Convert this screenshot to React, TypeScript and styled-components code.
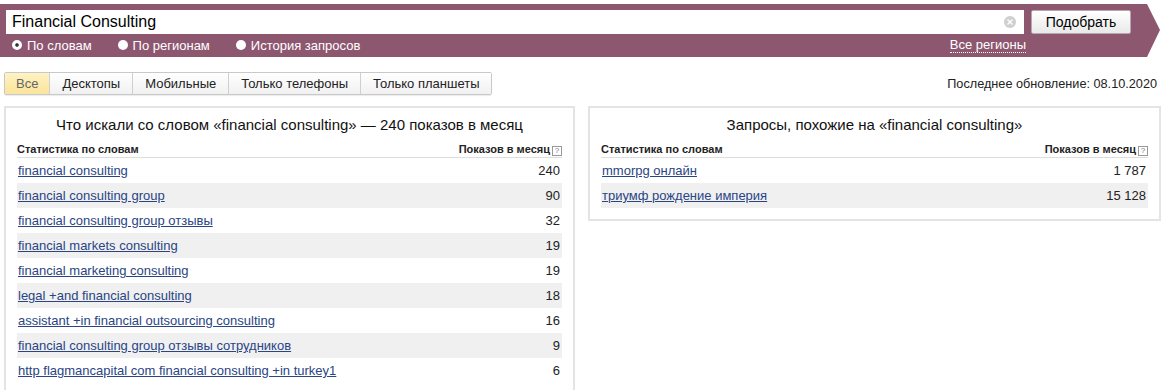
import styled, { createGlobalStyle } from "styled-components"

const GlobalStyle = createGlobalStyle`
  body {
    margin: 0;
    background: #fff;
    font-family: 'Liberation Sans', Arial, sans-serif;
    color: #000;
  }
`

const Page = styled.div`
  width: 1167px;
  height: 390px;
  overflow: hidden;
`

const Band = styled.div`
  margin: 4px 0 0 0;
  width: 1160px;
  height: 53px;
  background: #8e5770;
  clip-path: polygon(0 0, 1147px 0, 1160px 26px, 1147px 53px, 0 53px);
  padding: 6px 0 0 6px;
  box-sizing: border-box;
`

const SearchRow = styled.div`
  display: flex;
  align-items: center;
  gap: 7px;
`

const InputBox = styled.div`
  position: relative;
  width: 1018px;
  height: 24px;
  background: #fff;
  box-sizing: border-box;
  display: flex;
  align-items: center;
  padding-left: 6px;
  font-size: 16px;
  color: #000;
`

const ClearIcon = styled.span`
  position: absolute;
  right: 8px;
  top: 6px;
  width: 12px;
  height: 12px;
  border-radius: 50%;
  background: #cfcfcf;
  display: flex;
  align-items: center;
  justify-content: center;
`

const SubmitButton = styled.button`
  width: 100px;
  height: 24px;
  border: 1px solid #b7a7ae;
  border-radius: 2px;
  background: linear-gradient(#ffffff, #e9e9e9);
  font-family: 'Liberation Sans', Arial, sans-serif;
  font-size: 14px;
  color: #000;
  padding: 0;
`

const OptionsRow = styled.div`
  display: flex;
  align-items: center;
  height: 22px;
  width: 1018px;
  padding-left: 6px;
  box-sizing: border-box;
`

const Radio = styled.label`
  display: flex;
  align-items: center;
  gap: 5px;
  color: #fff;
  font-size: 13px;
  margin-right: 26px;
`

const RadioDot = styled.span<{ $checked?: boolean }>`
  width: 10px;
  height: 10px;
  border-radius: 50%;
  background: #fff;
  box-sizing: border-box;
  border: ${(p) => (p.$checked ? "3px solid #fff" : "none")};
  box-shadow: ${(p) => (p.$checked ? "inset 0 0 0 2px #333" : "none")};
`

const Regions = styled.span`
  margin-left: auto;
  margin-right: -2px;
  color: #fff;
  font-size: 13px;
  border-bottom: 1px dotted #fff;
  line-height: 14px;
`

const TabsRow = styled.div`
  display: flex;
  align-items: center;
  justify-content: space-between;
  margin: 15px 10px 0 4px;
`

const Tabs = styled.div`
  display: flex;
  border: 1px solid #c9c9c9;
  border-radius: 2px;
  box-shadow: 0 1px 1px rgba(0, 0, 0, 0.08);
`

const Tab = styled.div<{ $active?: boolean }>`
  height: 21px;
  display: flex;
  align-items: center;
  padding: 0 ${(p) => (p.$active ? "11px" : "12px")};
  font-size: 13px;
  color: ${(p) => (p.$active ? "#666" : "#222")};
  background: ${(p) =>
    p.$active ? "linear-gradient(#fff3c4, #fbe49a)" : "linear-gradient(#ffffff, #f1f1f1)"};
  & + & {
    border-left: 1px solid #cfcfcf;
  }
`

const Updated = styled.div`
  font-size: 12.7px;
  color: #222;
`

const Panels = styled.div`
  display: flex;
  align-items: flex-start;
  gap: 13px;
  margin: 11px 0 0 4px;
`

const Panel = styled.div<{ $width: number }>`
  width: ${(p) => p.$width}px;
  box-sizing: border-box;
  border: 2px solid #e4e4e4;
  padding: 6px 11px 11px 11px;
`

const PanelTitle = styled.div`
  text-align: center;
  font-size: 15px;
  line-height: 22px;
  color: #111;
  margin-bottom: 5px;
`

const HeadRow = styled.div`
  display: flex;
  justify-content: space-between;
  align-items: center;
  font-size: 11px;
  font-weight: bold;
  color: #222;
  height: 16px;
  border-bottom: 1px solid #ddd;
`

const Help = styled.span`
  display: inline-flex;
  align-items: center;
  justify-content: center;
  width: 8px;
  height: 8px;
  border: 1px solid #999;
  font-size: 8px;
  font-weight: normal;
  color: #777;
  margin-left: 2px;
  line-height: 8px;
`

const Row = styled.div<{ $shaded: boolean }>`
  display: flex;
  justify-content: space-between;
  align-items: center;
  height: 25px;
  padding: 0 2px 0 1px;
  font-size: 13px;
  background: ${(p) => (p.$shaded ? "#f0f0f0" : "transparent")};
`

const Phrase = styled.a`
  color: #2a4584;
  text-decoration: underline;
`

const Count = styled.span`
  color: #222;
`

const leftRows = [
  { phrase: "financial consulting", count: "240" },
  { phrase: "financial consulting group", count: "90" },
  { phrase: "financial consulting group отзывы", count: "32" },
  { phrase: "financial markets consulting", count: "19" },
  { phrase: "financial marketing consulting", count: "19" },
  { phrase: "legal +and financial consulting", count: "18" },
  { phrase: "assistant +in financial outsourcing consulting", count: "16" },
  { phrase: "financial consulting group отзывы сотрудников", count: "9" },
  { phrase: "http flagmancapital com financial consulting +in turkey1", count: "6" },
]

const rightRows = [
  { phrase: "mmorpg онлайн", count: "1 787" },
  { phrase: "триумф рождение империя", count: "15 128" },
]

const tabs = ["Все", "Десктопы", "Мобильные", "Только телефоны", "Только планшеты"]

const StatTable = ({ rows }: { rows: { phrase: string; count: string }[] }) => (
  <>
    <HeadRow>
      <span>Статистика по словам</span>
      <span>
        Показов в месяц<Help>?</Help>
      </span>
    </HeadRow>
    {rows.map((r, i) => (
      <Row key={r.phrase} $shaded={i % 2 === 1}>
        <Phrase>{r.phrase}</Phrase>
        <Count>{r.count}</Count>
      </Row>
    ))}
  </>
)

export default function App() {
  return (
    <Page>
      <GlobalStyle />
      <Band>
        <SearchRow>
          <InputBox>
            Financial Consulting
            <ClearIcon>
              <svg width="6" height="6" viewBox="0 0 6 6">
                <path d="M0.5 0.5 L5.5 5.5 M5.5 0.5 L0.5 5.5" stroke="#fff" strokeWidth="1.4" />
              </svg>
            </ClearIcon>
          </InputBox>
          <SubmitButton>Подобрать</SubmitButton>
        </SearchRow>
        <OptionsRow>
          <Radio>
            <RadioDot $checked />
            По словам
          </Radio>
          <Radio>
            <RadioDot />
            По регионам
          </Radio>
          <Radio>
            <RadioDot />
            История запросов
          </Radio>
          <Regions>Все регионы</Regions>
        </OptionsRow>
      </Band>
      <TabsRow>
        <Tabs>
          {tabs.map((t, i) => (
            <Tab key={t} $active={i === 0}>
              {t}
            </Tab>
          ))}
        </Tabs>
        <Updated>Последнее обновление: 08.10.2020</Updated>
      </TabsRow>
      <Panels>
        <Panel $width={571}>
          <PanelTitle>Что искали со словом «financial consulting» — 240 показов в месяц</PanelTitle>
          <StatTable rows={leftRows} />
        </Panel>
        <Panel $width={573}>
          <PanelTitle>Запросы, похожие на «financial consulting»</PanelTitle>
          <StatTable rows={rightRows} />
        </Panel>
      </Panels>
    </Page>
  )
}
